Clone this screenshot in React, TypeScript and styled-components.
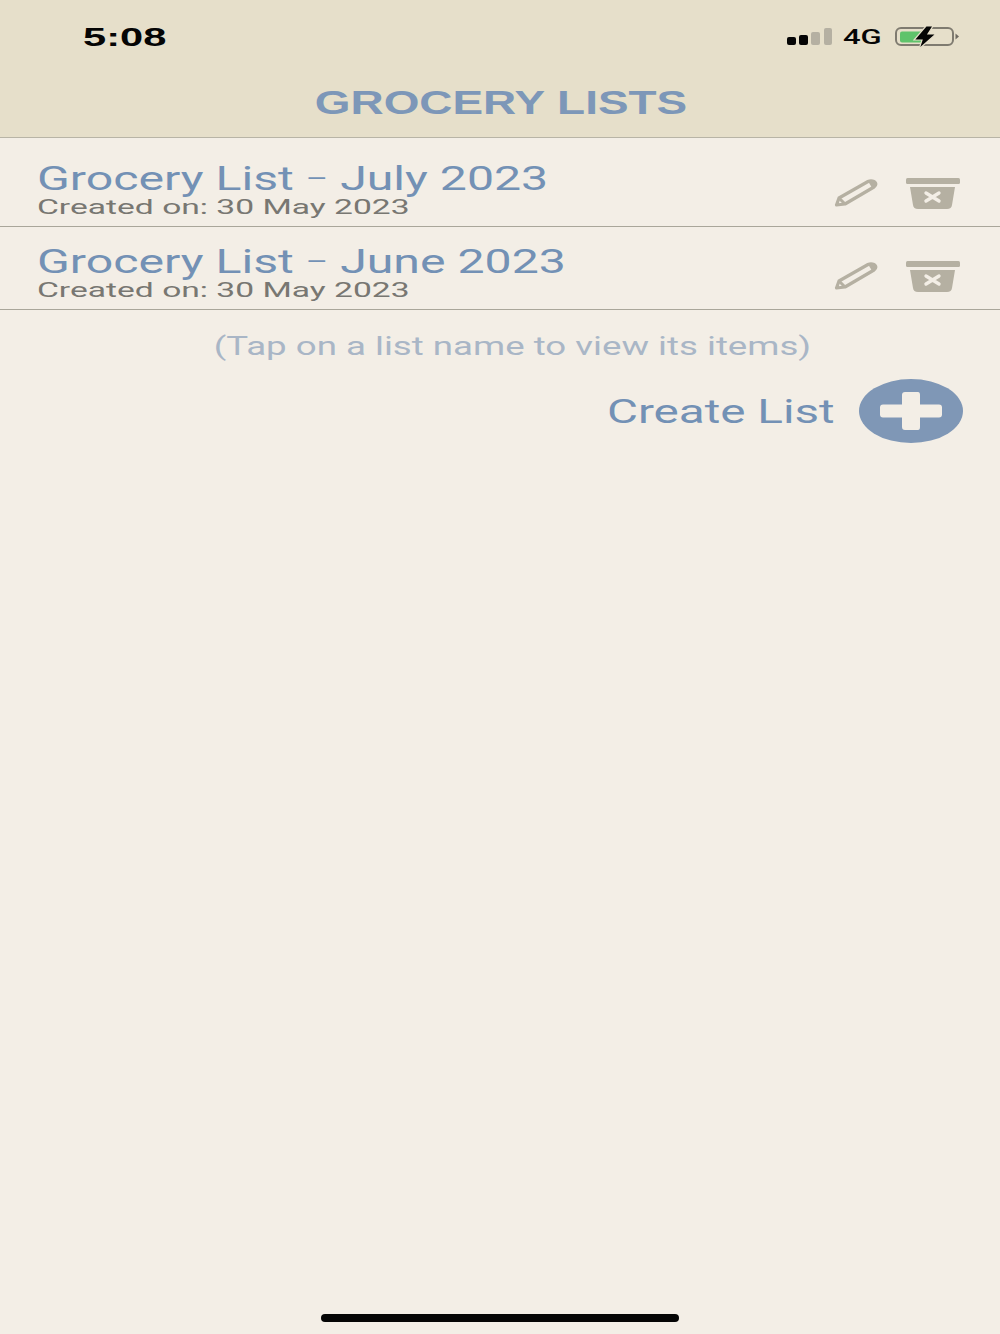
import React from "react";
import styled, { createGlobalStyle } from "styled-components";

const lists = [
    { month: "July 2023", created: "Created on: 30 May 2023", height: 89 },
    { month: "June 2023", created: "Created on: 30 May 2023", height: 83 },
];

export default function App() {
    return (
        <>
            <GlobalStyle />
            <Screen>
                <Header>
                    <StatusBar>
                        <Clock>5:08</Clock>
                        <StatusIcons>
                            <SignalIcon />
                            <Network>4G</Network>
                            <BatteryIcon />
                        </StatusIcons>
                    </StatusBar>
                    <Title>GROCERY LISTS</Title>
                </Header>
                {lists.map((list) => (
                    <ListRow key={list.month} $height={list.height}>
                        <ListText>
                            <ListName>
                                Grocery List <Dash>–</Dash> {list.month}
                            </ListName>
                            <ListDate>{list.created}</ListDate>
                        </ListText>
                        <RowActions>
                            <PencilIcon />
                            <TrashIcon />
                        </RowActions>
                    </ListRow>
                ))}
                <Hint>(Tap on a list name to view its items)</Hint>
                <CreateRow>
                    <CreateLabel>Create List</CreateLabel>
                    <AddButton aria-label="Create List">
                        <PlusIcon />
                    </AddButton>
                </CreateRow>
                <HomeIndicator />
            </Screen>
        </>
    );
}

function SignalIcon() {
    return (
        <svg width="46" height="18" viewBox="0 0 46 18">
            <rect x="0" y="9" width="9" height="8" rx="2" fill="#050505" />
            <rect x="12" y="7" width="9" height="10" rx="2" fill="#050505" />
            <rect x="24" y="4" width="9" height="13" rx="2" fill="#b5b0a2" />
            <rect x="37" y="0" width="8" height="17" rx="2" fill="#b5b0a2" />
        </svg>
    );
}

function BatteryIcon() {
    return (
        <svg width="65" height="24" viewBox="0 0 65 24">
            <rect x="1" y="3" width="57" height="17" rx="5" fill="none" stroke="#7f7b70" strokeWidth="2" />
            <rect x="5" y="6.500" width="27" height="11" rx="2" fill="#5fc36b" />
            <path d="M60.500 8.500 L64 11.500 L60.500 14.500 Z" fill="#6f6b62" />
            <path
                d="M31 1 L38 1 L33 9 L41 9 L24 24 L27 15 L19 15 Z"
                fill="#050505"
                stroke="#e6dfca"
                strokeWidth="1.200"
            />
        </svg>
    );
}

function PencilIcon() {
    return (
        <svg width="44" height="30" viewBox="0 0 44 30">
            <path
                d="M2.500 27 L5 20 L34 3.500 Q37 2 40 3.500 L41.500 5 Q42.500 7 40 9 L11 26 Z"
                fill="none"
                stroke="#b5b0a2"
                strokeWidth="3.200"
                strokeLinejoin="round"
            />
            <path d="M5 20 L11 26" fill="none" stroke="#b5b0a2" strokeWidth="3" />
            <path d="M34 3 L40 2.500 L42.500 6.500 L38 10 Z" fill="#b5b0a2" />
        </svg>
    );
}

function TrashIcon() {
    return (
        <svg width="54" height="32" viewBox="0 0 54 32">
            <rect x="0" y="0" width="54" height="6" rx="1.500" fill="#b5b0a2" />
            <path d="M4 9 H49 L46 27 Q45.500 31 41 31 H12 Q7.500 31 7 27 Z" fill="#b5b0a2" />
            <path d="M20 15 L33 23 M33 15 L20 23" stroke="#f3eee6" strokeWidth="3.400" strokeLinecap="round" />
        </svg>
    );
}

function PlusIcon() {
    return (
        <svg width="62" height="38" viewBox="0 0 62 38">
            <path
                d="M25 0 H38 Q40 0 40 3 V12.500 H59 Q62 12.500 62 15.500 V22.500 Q62 25.500 59 25.500 H40 V35 Q40 38 38 38 H25 Q22 38 22 35 V25.500 H3 Q0 25.500 0 22.500 V15.500 Q0 12.500 3 12.500 H22 V3 Q22 0 25 0 Z"
                fill="#f3eee6"
            />
        </svg>
    );
}

const GlobalStyle = createGlobalStyle`
    html, body {
        margin: 0;
        padding: 0;
        background-color: #f3eee6;
    }

    * {
        box-sizing: border-box;
    }
`;

const Screen = styled.div`
    display: flex;
    flex-direction: column;
    width: 1000px;
    height: 1334px;
    overflow: hidden;
    background-color: #f3eee6;
    font-family: Roboto, "Liberation Sans", Arial, sans-serif;
`;

const Header = styled.header`
    flex: none;
    height: 138px;
    padding-top: 20px;
    background-color: #e6dfca;
    border-bottom: 1px solid #b8b4a6;
    font-family: "Liberation Sans", Arial, sans-serif;
`;

const StatusBar = styled.div`
    display: flex;
    justify-content: space-between;
    align-items: center;
    height: 34px;
    padding: 0 40px 0 83px;
`;

const Clock = styled.span`
    display: inline-block;
    font-size: 26px;
    font-weight: 700;
    line-height: 34px;
    color: #050505;
    transform: scaleX(1.6);
    transform-origin: left center;
`;

const StatusIcons = styled.div`
    display: flex;
    align-items: center;
    gap: 10px;
`;

const Network = styled.span`
    display: inline-block;
    width: 42px;
    font-family: Roboto, sans-serif;
    font-size: 20px;
    font-weight: 500;
    line-height: 34px;
    color: #050505;
    transform: scaleX(1.55);
    transform-origin: left center;
`;

const Title = styled.h1`
    margin: 28px 0 0;
    font-size: 34px;
    font-weight: 700;
    line-height: 40px;
    text-align: center;
    color: #7d97b8;
    transform: translateX(1px) scaleX(1.35);
`;

const ListRow = styled.div<{ $height: number }>`
    flex: none;
    display: flex;
    justify-content: space-between;
    align-items: flex-end;
    height: ${(props) => props.$height}px;
    padding: 0 40px 16px 37px;
    border-bottom: 1px solid #a9a69a;
`;

const ListText = styled.div`
    display: flex;
    flex-direction: column;
    align-self: flex-end;
    margin-bottom: -9px;
`;

const ListName = styled.span`
    font-size: 34px;
    line-height: 34px;
    color: #7391b5;
    transform: scaleX(1.418);
    transform-origin: left center;
    white-space: nowrap;
`;

const Dash = styled.span`
    position: relative;
    top: -3px;
    font-size: 24px;
    line-height: 0;
`;

const ListDate = styled.span`
    font-size: 21px;
    line-height: 24px;
    color: #787772;
    transform: scaleX(1.6);
    transform-origin: left center;
    white-space: nowrap;
`;

const RowActions = styled.div`
    display: flex;
    align-items: flex-start;
    gap: 28px;
`;

const Hint = styled.p`
    margin: 23px 0 0;
    padding-left: 17px;
    font-size: 25px;
    line-height: 28px;
    text-align: center;
    color: #a9b6c6;
    transform: scaleX(1.466);
`;

const CreateRow = styled.div`
    display: flex;
    justify-content: flex-end;
    align-items: center;
    gap: 24px;
    margin-top: 18px;
    padding-right: 37px;
`;

const CreateLabel = styled.span`
    font-size: 34px;
    line-height: 40px;
    color: #7391b5;
    transform: scaleX(1.4);
    transform-origin: right center;
`;

const AddButton = styled.button`
    display: flex;
    justify-content: center;
    align-items: center;
    width: 104px;
    height: 64px;
    padding: 0;
    border: 0;
    border-radius: 50%;
    background-color: #7f97b6;
`;

const HomeIndicator = styled.div`
    width: 358px;
    height: 8px;
    margin: auto auto 12px;
    border-radius: 4px;
    background-color: #050505;
`;
